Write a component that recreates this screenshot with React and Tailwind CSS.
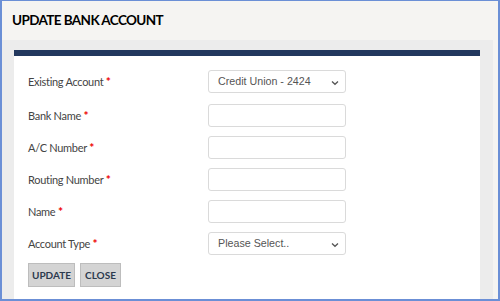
import React from "react";

const Chevron = () => (
  <svg width="8" height="6" viewBox="0 0 8 6" className="absolute right-[6px] top-[9px]">
    <path d="M1 1.5 L4 4.3 L7 1.5" fill="none" stroke="#555" strokeWidth="1.3" />
  </svg>
);

const Row = ({ label, children, className = "" }) => (
  <div className={"flex items-center h-[23px] " + className}>
    <div className="w-[180px] text-[11px] tracking-[-0.3px] text-[#444]">
      {label} <span className="text-[#e00] font-bold text-[12px]">*</span>
    </div>
    {children}
  </div>
);

const Input = () => (
  <div className="w-[138px] h-[23px] border border-[#dadada] rounded-[3px] bg-white" />
);

const Select = ({ text }) => (
  <div className="relative w-[138px] h-[23px] border border-[#dadada] rounded-[3px] bg-white flex items-center pl-[9px] text-[10.7px] text-[#555] font-['Liberation_Sans',sans-serif]">
    {text}
    <Chevron />
  </div>
);

export default function App() {
  return (
    <div className="w-[500px] h-[301px] overflow-hidden font-['Lato',sans-serif]">
      <div className="w-[500px] h-[301px] border-l-2 border-t border-r-2 border-b-2 border-[#6b8fd6] bg-[#f5f4f2] flex flex-col">
        <div className="h-[39px] flex items-center pl-[10px] text-[13.5px] tracking-[-0.6px] font-bold text-black">
          UPDATE BANK ACCOUNT
        </div>
        <div className="flex-1 bg-[#ececec] mr-[5px] pl-[12px] pr-[13px] pt-[10px] flex">
          <div className="flex-1 bg-white border-t-[6px] border-[#22385e] pl-[14px] pt-[14px] flex flex-col">
            <Row label="Existing Account"><Select text="Credit Union - 2424" /></Row>
            <Row label="Bank Name" className="mt-[11px]"><Input /></Row>
            <Row label="A/C Number" className="mt-[9px]"><Input /></Row>
            <Row label="Routing Number" className="mt-[9px]"><Input /></Row>
            <Row label="Name" className="mt-[9px]"><Input /></Row>
            <Row label="Account Type" className="mt-[9px]"><Select text="Please Select.." /></Row>
            <div className="flex gap-[5px] mt-[8px]">
              <button className="h-[24px] w-[47px] bg-[#d4d4d4] border border-[#bdbdbd] text-[10px] font-bold text-[#2c3a4e]">UPDATE</button>
              <button className="h-[24px] w-[41px] bg-[#d4d4d4] border border-[#bdbdbd] text-[10px] font-bold text-[#2c3a4e]">CLOSE</button>
            </div>
          </div>
        </div>
      </div>
    </div>
  );
}
